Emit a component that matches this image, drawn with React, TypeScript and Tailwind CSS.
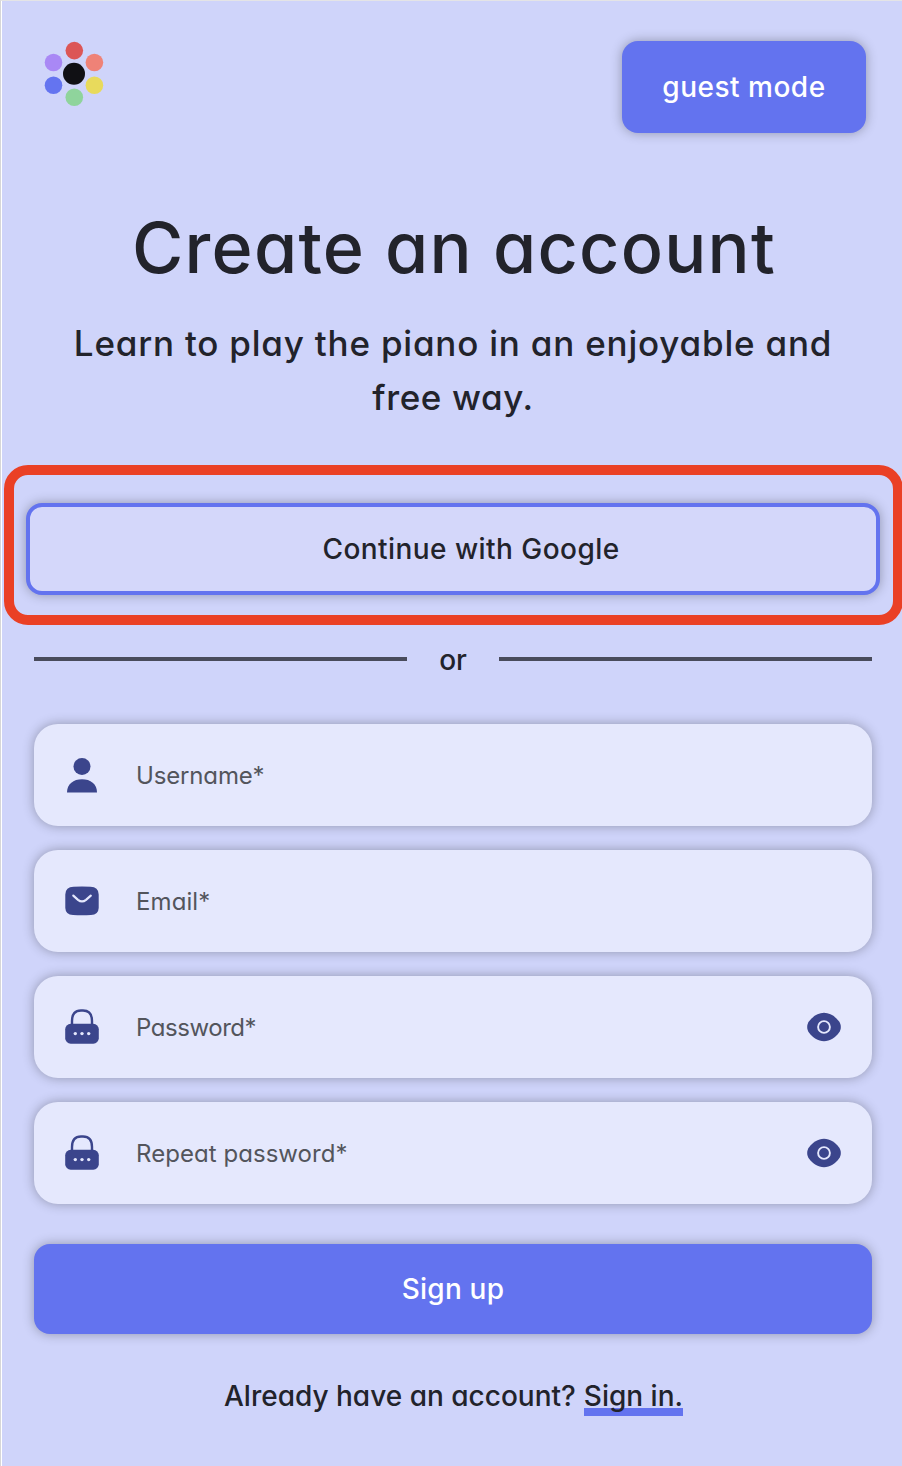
import type { ReactNode } from "react";

function Logo() {
  return (
    <svg width="60" height="66" viewBox="44 41 60 66" aria-hidden="true">
      <circle cx="74.3" cy="50.6" r="8.8" fill="#dc5656" />
      <circle cx="53.5" cy="62.5" r="8.8" fill="#a988f5" />
      <circle cx="94.4" cy="62.5" r="8.8" fill="#ef8277" />
      <circle cx="53.5" cy="85.3" r="8.8" fill="#6474f0" />
      <circle cx="94.4" cy="85.3" r="8.8" fill="#e8da5c" />
      <circle cx="74.3" cy="97.3" r="8.8" fill="#8fd49c" />
      <circle cx="74" cy="73.8" r="11" fill="#101014" />
    </svg>
  );
}

function UserIcon() {
  return (
    <svg width="36" height="36" viewBox="0 0 36 36" fill="#3b458c">
      <circle cx="18" cy="9.6" r="8.5" />
      <path d="M3 35.5C3 27 9.5 22.3 18 22.3S33 27 33 35.5Z" />
    </svg>
  );
}

function MailIcon() {
  return (
    <svg width="36" height="36" viewBox="0 0 36 36">
      <path
        d="M9.5 3.8Q18 3 26.5 3.8Q34.4 3.8 34.7 11.5V25Q34.4 31.8 27 32Q18 32.5 9 32Q1.6 31.8 1.3 25V11.5Q1.6 3.8 9.5 3.8Z"
        fill="#3b458c"
      />
      <path d="M9.3 12.6L14 16.8Q18 20 22 16.8L26.8 12.6" fill="none" stroke="#e5e8fd" strokeWidth="2.2" strokeLinecap="round" />
    </svg>
  );
}

function LockIcon() {
  return (
    <svg width="36" height="36" viewBox="0 0 36 36">
      <path d="M8 16V12Q8 1.5 17 1.5H19Q28 1.5 28 12V16" fill="none" stroke="#3b458c" strokeWidth="2.4" />
      <rect x="1.2" y="14.8" width="33.6" height="19.9" rx="5.5" fill="#3b458c" />
      <circle cx="11.3" cy="24.6" r="1.7" fill="#e5e8fd" />
      <circle cx="18" cy="24.6" r="1.7" fill="#e5e8fd" />
      <circle cx="24.7" cy="24.6" r="1.7" fill="#e5e8fd" />
    </svg>
  );
}

function EyeIcon() {
  return (
    <svg width="36" height="36" viewBox="0 0 36 36">
      <path
        d="M1.2 18C1.2 15.6 1.8 14.1 3.1 12.3C6.5 7.6 12 3.8 18 3.8S29.5 7.6 32.9 12.3C34.2 14.1 34.8 15.6 34.8 18S34.2 21.9 32.9 23.7C29.5 28.4 24 32.2 18 32.2S6.5 28.4 3.1 23.7C1.8 21.9 1.2 20.4 1.2 18Z"
        fill="#3b458c"
      />
      <circle cx="18" cy="18" r="5.9" fill="none" stroke="#e5e8fd" strokeWidth="1.9" />
    </svg>
  );
}

type FieldProps = { icon: ReactNode; label: string; textClass: string; secret?: boolean };

function Field({ icon, label, textClass, secret }: FieldProps) {
  return (
    <label className="flex h-[102px] items-center rounded-3xl bg-[#e5e8fd] px-[30px] shadow-[0_0_12px_rgba(0,0,0,0.3)]">
      {icon}
      <span className={`ml-9 flex-1 whitespace-nowrap pt-0.5 text-2xl font-normal text-[#53555c] ${textClass}`}>{label}</span>
      {secret && <EyeIcon />}
    </label>
  );
}

export default function App() {
  return (
    <div className="flex h-[1466px] w-[902px] flex-col overflow-hidden border-l border-t border-l-[#d6d6d8] border-t-[#e4e4e6] bg-[#cfd4fa] font-['Inter','Noto_Sans',sans-serif] font-[450] text-[#22232b] [font-feature-settings:'cv11']">
      <div className="flex flex-1 flex-col border-l border-white">
        <header className="flex h-[132px] items-start justify-between pl-[42px] pr-9 pt-10">
          <Logo />
          <button className="h-[92px] w-[244px] rounded-2xl bg-[#6373ef] text-[28px] tracking-[0.5px] text-white shadow-[0_0_12px_rgba(0,0,0,0.3)]">
            guest mode
          </button>
        </header>

        <h1 className="mt-[70px] whitespace-nowrap pl-1 text-center text-[70px] font-medium leading-[90px] tracking-[1.25px]">Create an account</h1>
        <p className="mt-[23px] pl-0.5 text-center text-[35px] leading-[54px] tracking-[0.79px]">
          <span className="whitespace-nowrap">Learn to play the piano in an enjoyable and</span>
          <br />
          <span className="tracking-[0.6px]">free way.</span>
        </p>

        <div className="ml-0.5 mt-[41px] h-40 w-[899px] rounded-3xl border-[10px] border-[#ea4025] px-3 pt-7">
          <button className="h-[92px] w-[854px] rounded-2xl border-4 border-[#6373ef] bg-[#d4d7fa] pl-9 text-[28px] tracking-[0.45px] shadow-[0_0_12px_rgba(0,0,0,0.3)]">
            Continue with Google
          </button>
        </div>

        <div className="mx-8 mt-[14px] flex h-10 w-[838px] items-center text-[28px]">
          <span className="h-1 flex-1 bg-[#494b5b]" />
          <span className="w-[92px] pt-0.5 text-center">or</span>
          <span className="h-1 flex-1 bg-[#494b5b]" />
        </div>

        <form className="ml-8 mt-[45px] flex w-[838px] flex-col gap-6">
          <Field icon={<UserIcon />} label="Username*" textClass="tracking-[-0.15px]" />
          <Field icon={<MailIcon />} label="Email*" textClass="tracking-[0.1px]" />
          <Field icon={<LockIcon />} label="Password*" textClass="tracking-[-0.45px]" secret />
          <Field icon={<LockIcon />} label="Repeat password*" textClass="tracking-[0.05px]" secret />
          <button type="button" className="mt-4 h-[90px] rounded-2xl bg-[#6373ef] text-[28px] tracking-[0.2px] text-white shadow-[0_0_12px_rgba(0,0,0,0.3)]">
            Sign up
          </button>
        </form>

        <p className="mt-[42px] flex justify-center gap-2 whitespace-nowrap pl-[3px] text-[28px] leading-10">
          <span>Already have an account?</span>
          <a className="bg-[linear-gradient(#6373ef,#6373ef)] bg-[length:100%_8px] bg-bottom bg-no-repeat">Sign in.</a>
        </p>
      </div>
    </div>
  );
}
